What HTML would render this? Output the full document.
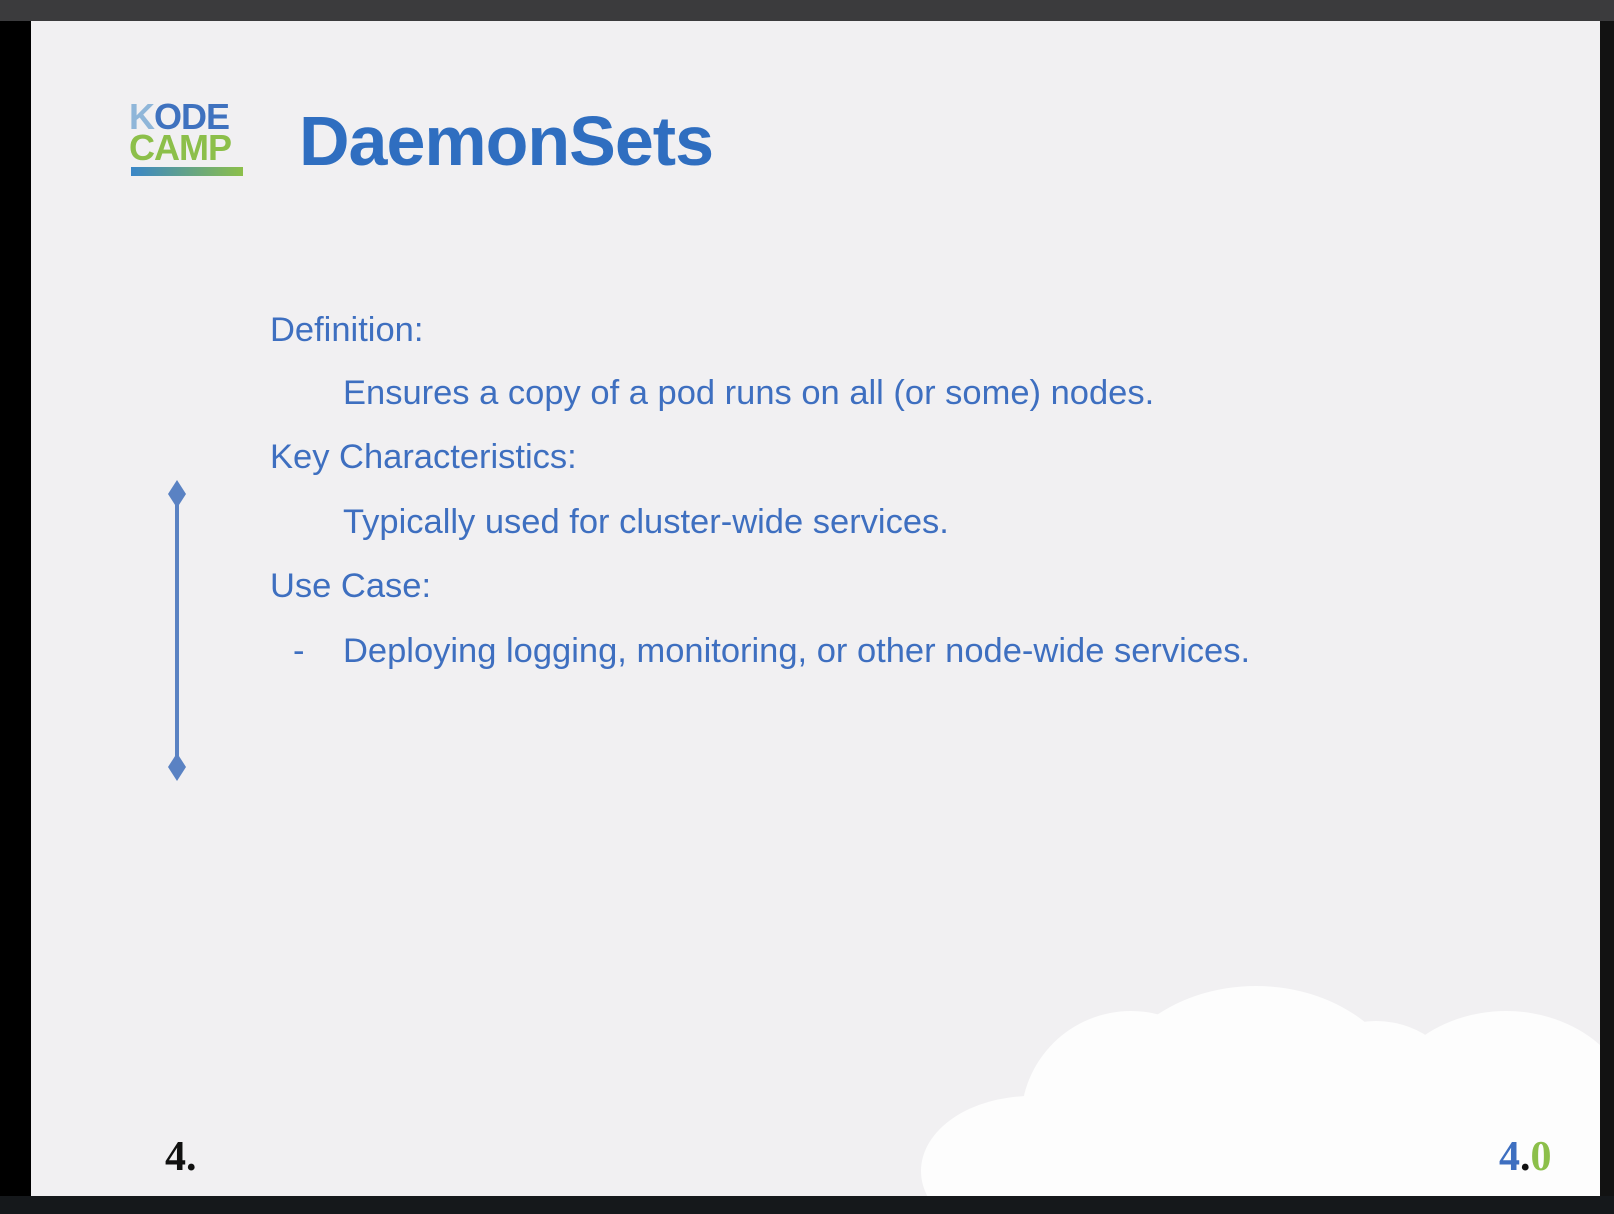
<!DOCTYPE html>
<html><head><meta charset="utf-8"><style>
html,body{margin:0;padding:0;}
body{width:1614px;height:1214px;background:#000;position:relative;overflow:hidden;font-family:"Liberation Sans",sans-serif;}
.top{position:absolute;left:0;top:0;width:1614px;height:21px;background:#3b3b3d;}
.bot{position:absolute;left:0;top:1196px;width:1614px;height:18px;background:#15181b;}
.rt{position:absolute;left:1600px;top:21px;width:14px;height:1175px;background:#121212;}
.slide{position:absolute;left:31px;top:21px;width:1569px;height:1175px;background:#f1f0f2;overflow:hidden;}
.t{position:absolute;color:#3e6fc0;font-size:34.5px;white-space:nowrap;line-height:1;}
</style></head><body>
<div class="top"></div><div class="rt"></div><div class="bot"></div>
<div class="slide">
  <svg style="position:absolute;left:0;top:0" width="1569" height="1175">
    <g fill="#fdfdfd">
      <ellipse cx="1225" cy="1090" rx="155" ry="125"/>
      <ellipse cx="1100" cy="1100" rx="110" ry="110"/>
      <ellipse cx="1000" cy="1150" rx="110" ry="75"/>
      <ellipse cx="1345" cy="1075" rx="85" ry="75"/>
      <ellipse cx="1475" cy="1100" rx="130" ry="110"/>
      <rect x="900" y="1130" width="669" height="50"/>
    </g>
    <line x1="146" y1="470" x2="146" y2="745" stroke="#5a82c3" stroke-width="4"/>
    <polygon points="146,459 155,473 146,487 137,473" fill="#5a82c3"/>
    <polygon points="146,732 155,746 146,760 137,746" fill="#5a82c3"/>
  </svg>
  <div style="position:absolute;left:98px;top:80px;font-weight:bold;font-size:36px;line-height:31px;letter-spacing:-1px;">
    <div style="color:#3f72bf"><span style="color:#8fb6d9">K</span>ODE</div>
    <div style="color:#8cbf4a">CAMP</div>
  </div>
  <div style="position:absolute;left:100px;top:146px;width:112px;height:9px;background:linear-gradient(90deg,#3a86c8,#8cbf4a);"></div>
  <div class="t" style="left:268px;top:85px;font-size:70px;font-weight:bold;color:#2f6ec0;letter-spacing:-1px;">DaemonSets</div>
  <div class="t" style="left:239px;top:292px;">Definition:</div>
  <div class="t" style="left:312px;top:355px;">Ensures a copy of a pod runs on all (or some) nodes.</div>
  <div class="t" style="left:239px;top:419px;">Key Characteristics:</div>
  <div class="t" style="left:312px;top:484px;">Typically used for cluster-wide services.</div>
  <div class="t" style="left:239px;top:548px;">Use Case:</div>
  <div class="t" style="left:262px;top:613px;">-</div>
  <div class="t" style="left:312px;top:613px;">Deploying logging, monitoring, or other node-wide services.</div>
  <div class="t" style="left:134px;top:1115px;font-family:'Liberation Serif',serif;font-weight:bold;font-size:42px;color:#111;">4.</div>
  <div class="t" style="left:1468px;top:1115px;font-family:'Liberation Serif',serif;font-weight:bold;font-size:42px;"><span style="color:#3e6fc0">4</span><span style="color:#111">.</span><span style="color:#8cbf4a">0</span></div>
</div>
</body></html>
